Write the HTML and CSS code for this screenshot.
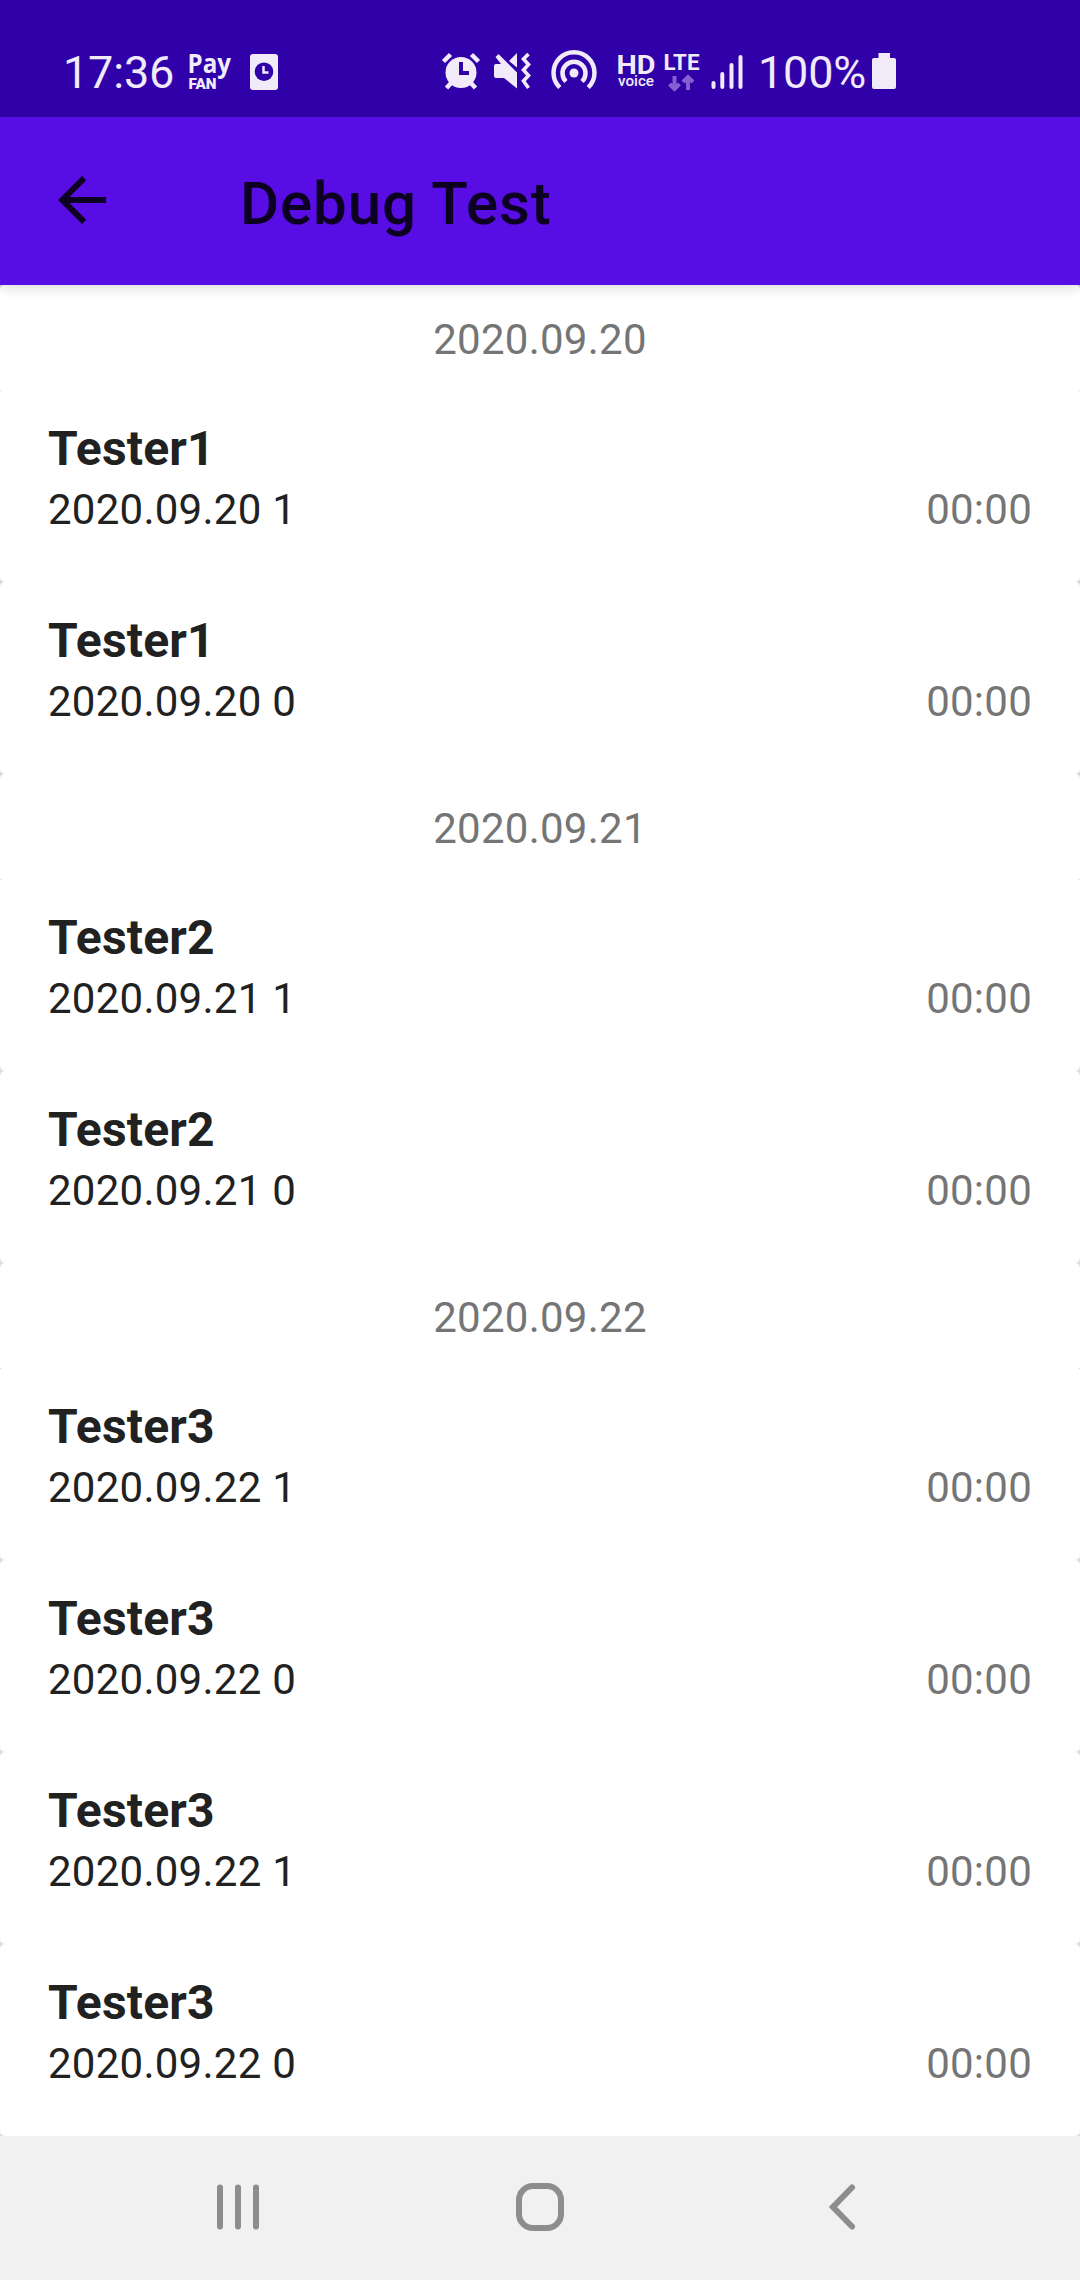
FILE: index.html
```html
<!DOCTYPE html>
<html lang="en">
<head>
<meta charset="utf-8">
<title>Debug Test</title>
<link rel="stylesheet" href="styles.css">
</head>
<body>
<div class="screen">
  <div class="status">
    <div class="clock">17:36</div>
    <svg class="pay" viewBox="186 48 50 48" width="50" height="48">
      <text x="187.500" y="73" class="pay-name" textLength="43.500" lengthAdjust="spacingAndGlyphs">Pay</text>
      <text x="188.500" y="88.500" class="pay-fan" textLength="28" lengthAdjust="spacingAndGlyphs">FAN</text>
    </svg>
    <svg class="doc" viewBox="248 48 32 48" width="32" height="48">
      <rect x="250" y="54" width="28" height="36" rx="3"/>
      <circle cx="264" cy="71.700" r="9.300" class="hole"/>
      <path d="M263.500 66V72.500H268.500" class="line thin"/>
    </svg>
    <svg class="alarm" viewBox="440 48 42 48" width="42" height="48">
      <circle cx="461" cy="72.500" r="15.500"/>
      <path d="M443.500 61.500L450.500 54.500M478.500 61.500L471.500 54.500M446.500 88L452 82M475.500 88L470 82" class="line"/>
      <path d="M461 62V73H469" class="cut"/>
    </svg>
    <svg class="mute" viewBox="492 48 40 48" width="40" height="48">
      <path d="M494 66Q494 64 496 64H501L495.500 57L498.500 54L517 72.500V88.500L504 78H496Q494 78 494 76ZM509 61L517 53V67.500Z"/>
      <path d="M528.500 54L523.500 59L528.500 64.500L523.500 70L528.500 75.500L523.500 81L528.500 88" class="line wave"/>
    </svg>
    <svg class="hotspot" viewBox="549 48 50 48" width="50" height="48">
      <circle cx="574" cy="73" r="4.500"/>
      <path d="M566 81.500A11.500 11.500 0 1 1 582 81.500M559.800 87.500A20.500 20.500 0 1 1 588.200 87.500" class="line"/>
    </svg>
    <svg class="hd" viewBox="616 48 42 48" width="42" height="48">
      <text x="616.500" y="73.500" class="hd-top" textLength="39" lengthAdjust="spacingAndGlyphs">HD</text>
      <text x="618" y="85.500" class="hd-voice" textLength="36" lengthAdjust="spacingAndGlyphs">voice</text>
    </svg>
    <svg class="lte" viewBox="663 48 38 48" width="38" height="48">
      <text x="663.500" y="70" class="lte-text" textLength="36" lengthAdjust="spacingAndGlyphs">LTE</text>
      <path d="M674.500 76V89M669.500 84L674.500 89L679.500 84M688 90V77M683 82L688 77L693 82" class="line dim"/>
    </svg>
    <svg class="signal" viewBox="710 48 34 48" width="34" height="48">
      <path d="M713.500 83V87M722.300 74V87M731.500 65V87M740.500 57V87" class="line round"/>
    </svg>
    <div class="percent">100%</div>
    <svg class="battery" viewBox="870 48 28 48" width="28" height="48">
      <path d="M878.500 53H890V58H894Q896 58 896 60V87Q896 89 894 89H874Q872 89 872 87V60Q872 58 874 58H878.500Z"/>
    </svg>
  </div>

  <header class="appbar">
    <svg class="back" viewBox="0 0 24 24" width="72" height="72"><path d="M20 11H7.830l5.590-5.590L12 4l-8 8 8 8 1.410-1.410L7.830 13H20v-2z"/></svg>
    <h1 class="title">Debug Test</h1>
  </header>

  <main class="list">
    <div class="date">2020.09.20</div>
    <div class="card"><div class="name">Tester1</div><div class="line-row"><span>2020.09.20 1</span><span class="time">00:00</span></div></div>
    <div class="card"><div class="name">Tester1</div><div class="line-row"><span>2020.09.20 0</span><span class="time">00:00</span></div></div>
    <div class="date">2020.09.21</div>
    <div class="card"><div class="name">Tester2</div><div class="line-row"><span>2020.09.21 1</span><span class="time">00:00</span></div></div>
    <div class="card"><div class="name">Tester2</div><div class="line-row"><span>2020.09.21 0</span><span class="time">00:00</span></div></div>
    <div class="date">2020.09.22</div>
    <div class="card"><div class="name">Tester3</div><div class="line-row"><span>2020.09.22 1</span><span class="time">00:00</span></div></div>
    <div class="card"><div class="name">Tester3</div><div class="line-row"><span>2020.09.22 0</span><span class="time">00:00</span></div></div>
    <div class="card"><div class="name">Tester3</div><div class="line-row"><span>2020.09.22 1</span><span class="time">00:00</span></div></div>
    <div class="card"><div class="name">Tester3</div><div class="line-row"><span>2020.09.22 0</span><span class="time">00:00</span></div></div>
  </main>

  <nav class="navbar">
    <svg viewBox="0 0 60 60" width="60" height="60"><path d="M12 10.500V49.500M30 10.500V49.500M48 10.500V49.500"/></svg>
    <svg viewBox="0 0 60 60" width="60" height="60"><rect x="9" y="9" width="42" height="42" rx="14"/></svg>
    <svg viewBox="0 0 60 60" width="60" height="60"><path d="M40 10.500L21 30L40 49.500"/></svg>
  </nav>
</div>
</body>
</html>
```
FILE: styles.css
```css
* { box-sizing: border-box; }

body {
  margin: 0;
  font-family: Roboto, sans-serif;
  background: #fff;
}

.screen {
  display: flex;
  flex-direction: column;
  width: 1080px;
  height: 2280px;
  overflow: hidden;
}

/* status bar */
.status {
  display: flex;
  flex: none;
  height: 117px;
  padding: 48px 0 0 63px;
  background: #3000a9;
  color: #f0eaf9;
  font-size: 45px;
  line-height: 49px;
  letter-spacing: -.2px;
  white-space: nowrap;
}
.status svg { flex: none; overflow: visible; fill: #f0eaf9; letter-spacing: 0; }
.clock { width: 123px; }
.doc { margin-left: 12px; }
.alarm { margin-left: 160px; }
.mute { margin-left: 10px; }
.hotspot { margin-left: 17px; }
.hd { margin-left: 17px; }
.lte { margin-left: 5px; }
.signal { margin-left: 9px; }
.percent { width: 112px; margin-left: 14px; }
.status .hole { fill: #3000a9; }
.status .line { fill: none; stroke: #f0eaf9; stroke-width: 4.5; }
.status .thin { stroke-width: 2.5; }
.status .wave { stroke-width: 3.6; }
.status .round { stroke-linecap: round; stroke-width: 4; }
.status .dim { stroke: #8560d0; stroke-width: 4; }
.status .cut { fill: none; stroke: #3000a9; stroke-width: 4; }
.pay-name { font: 700 26px "Open Sans", sans-serif; }
.pay-fan { font: 900 14px Roboto, sans-serif; }
.hd-top { font: 700 25px Roboto, sans-serif; }
.hd-voice { font: 500 15px Roboto, sans-serif; }
.lte-text { font: 700 22px Roboto, sans-serif; }

/* app bar */
.appbar {
  display: flex;
  flex: none;
  align-items: center;
  height: 168px;
  padding: 0 0 2px 46px;
  background: #570de3;
  position: relative;
  box-shadow: 0 3px 12px rgba(0, 0, 0, .14);
}
.back { fill: #0d0122; }
.title {
  margin: 0 0 0 122px;
  padding-top: 6px;
  font-size: 60px;
  font-weight: 500;
  letter-spacing: .9px;
  color: #0d0122;
}

/* message list */
.list {
  flex: none;
  background: #dcdcdc;
  font-size: 42px;
  line-height: 57px;
  letter-spacing: .25px;
}
.date {
  height: 105px;
  padding-top: 26px;
  background: #fff;
  border-radius: 5px 5px 0 0;
  color: #757575;
  text-align: center;
}
.card {
  height: 192px;
  padding: 27px 48px 0;
  background: #fff;
  border-radius: 5px;
  color: #212121;
}
.date + .card { border-radius: 3px 3px 5px 5px; }
.name {
  font-size: 48px;
  font-weight: 700;
  line-height: 64px;
  letter-spacing: .2px;
}
.line-row { display: flex; justify-content: space-between; }
.time { color: #757575; }

/* navigation bar */
.navbar {
  display: flex;
  flex: none;
  justify-content: space-between;
  align-items: center;
  height: 144px;
  padding: 0 208px 2px;
  background: #f1f1f1;
}
.navbar svg { fill: none; stroke: #8d8d8d; stroke-width: 6; stroke-linecap: round; }
```
